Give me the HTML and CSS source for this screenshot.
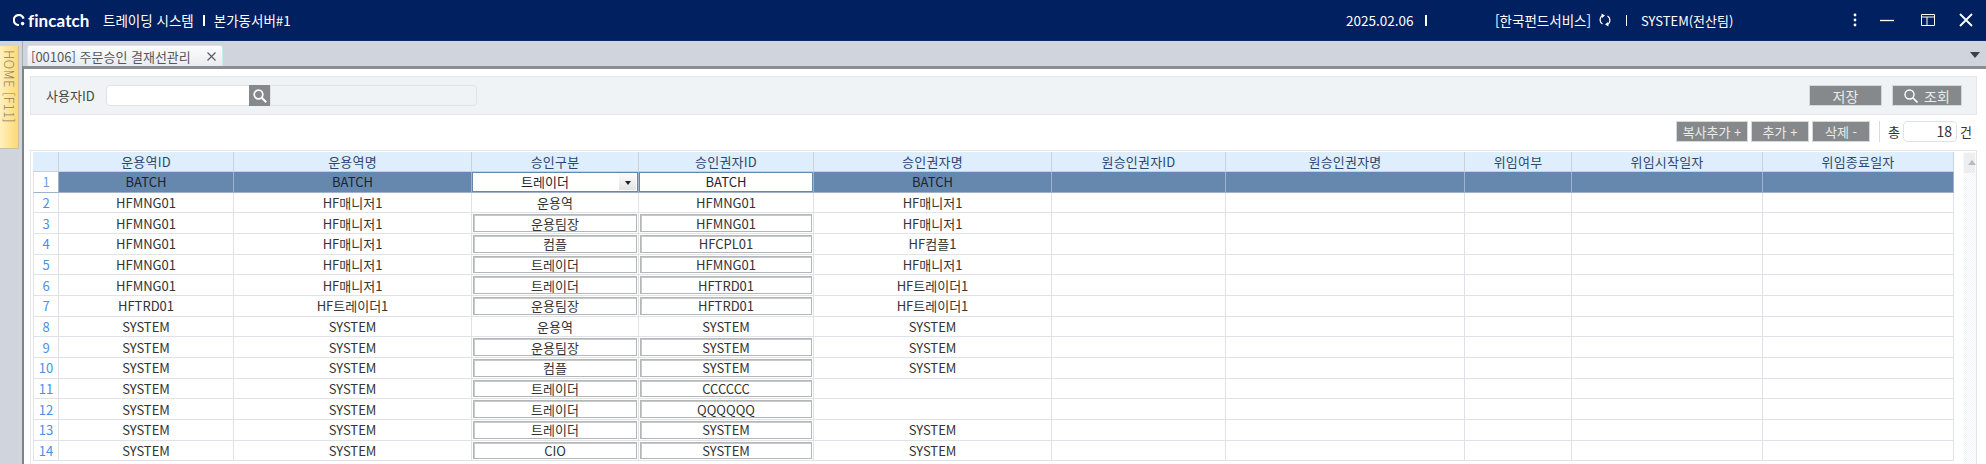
FILE: index.html
```html
<!DOCTYPE html>
<html lang="ko">
<head>
<meta charset="utf-8">
<title>fincatch 트레이딩 시스템</title>
<link rel="stylesheet" href="styles.css">
</head>
<body>
<header class="topbar">
  <div class="brand">
    <svg class="logo-mark" viewBox="0 0 12 12" width="12" height="12"><path d="M10.600 4.600A5 5 0 1 0 6 11" fill="none" stroke="#fff" stroke-width="2.200"/><circle cx="9.600" cy="9.600" r="1.800" fill="#fff"/></svg>
    <span class="logo-text">fincatch</span>
  </div>
  <span class="title t1">트레이딩 시스템</span>
  <i class="sep sep-a"></i>
  <span class="title">본가동서버#1</span>
  <div class="top-right">
    <span class="title date">2025.02.06</span>
    <i class="sep sep-b"></i>
    <span class="title org">[한국펀드서비스]</span>
    <svg class="refresh" viewBox="0 0 14 14" width="14" height="14"><path d="M5 2.200A5 5 0 0 0 4.500 11M9 11.800A5 5 0 0 0 9.500 3" fill="none" stroke="#fff" stroke-width="1.200"/><path d="M3.500 .5L7 2.500 4 5zM10.500 13.500L7 11.500 10 9z" fill="#fff"/></svg>
    <i class="sep sep-c"></i>
    <span class="title user">SYSTEM(전산팀)</span>
    <div class="win">
      <svg class="w-kebab" viewBox="0 0 4 14" width="4" height="14"><circle cx="2" cy="2" r="1.400" fill="#fff"/><circle cx="2" cy="7" r="1.400" fill="#fff"/><circle cx="2" cy="12" r="1.400" fill="#fff"/></svg>
      <svg class="w-min" viewBox="0 0 14 14" width="14" height="14"><path d="M0 7.500h14" stroke="#fff" stroke-width="1.300"/></svg>
      <svg class="w-max" viewBox="0 0 14 14" width="14" height="14"><path d="M.5 1.500h13v11H.5zM.5 4h13M6 4v8.500" fill="none" stroke="#fff"/></svg>
      <svg class="w-close" viewBox="0 0 14 14" width="14" height="14"><path d="M1 1l12 12M13 1L1 13" stroke="#fff" stroke-width="1.800"/></svg>
    </div>
  </div>
</header>
<div class="body">
  <aside class="rail"><div class="home">HOME [F11]</div></aside>
  <main class="work">
    <div class="tabbar">
      <div class="tab"><span>[00106] 주문승인 결재선관리</span><svg viewBox="0 0 9 9" width="9" height="9"><path d="M.5.500l8 8M8.500.500l-8 8" stroke="#555b63" stroke-width="1.100"/></svg></div>
      <i class="tab-menu"></i>
    </div>
    <div class="panel">
      <section class="search">
        <label class="lbl">사용자ID</label>
        <div class="field"></div>
        <button class="find"><svg viewBox="0 0 14 14" width="14" height="14"><circle cx="5.500" cy="5.500" r="4.300" fill="none" stroke="#fff" stroke-width="1.700"/><path d="M8.800 8.800l4.400 4.400" stroke="#fff" stroke-width="2"/></svg></button>
        <div class="field-off"></div>
        <div class="search-actions">
          <button class="btn b-save">저장</button>
          <button class="btn b-query"><svg viewBox="0 0 14 14" width="14" height="14"><circle cx="5.500" cy="5.500" r="4.500" fill="none" stroke="#fff" stroke-width="1.400"/><path d="M9 9l4.500 4.500" stroke="#fff" stroke-width="1.600"/></svg>조회</button>
        </div>
      </section>
      <div class="tools">
        <button class="btn mini w72">복사추가 +</button>
        <button class="btn mini w58">추가 +</button>
        <button class="btn mini w58">삭제 -</button>
        <i class="divider"></i>
        <span class="cnt">총</span>
        <div class="count">18</div>
        <span class="cnt">건</span>
      </div>
      <section class="grid">
        <div class="rows">
          <div class="row head"><div></div><div>운용역ID</div><div>운용역명</div><div>승인구분</div><div>승인권자ID</div><div>승인권자명</div><div>원승인권자ID</div><div>원승인권자명</div><div>위임여부</div><div>위임시작일자</div><div>위임종료일자</div></div>
          <div class="row sel"><div class="n">1</div><div>BATCH</div><div>BATCH</div><div class="c"><span class="box pick">트레이더<b></b></span></div><div class="c"><span class="box strong">BATCH</span></div><div>BATCH</div><div></div><div></div><div></div><div></div><div></div></div>
          <div class="row"><div class="n">2</div><div>HFMNG01</div><div>HF매니저1</div><div>운용역</div><div>HFMNG01</div><div>HF매니저1</div><div></div><div></div><div></div><div></div><div></div></div>
          <div class="row"><div class="n">3</div><div>HFMNG01</div><div>HF매니저1</div><div class="c"><span class="box">운용팀장</span></div><div class="c"><span class="box">HFMNG01</span></div><div>HF매니저1</div><div></div><div></div><div></div><div></div><div></div></div>
          <div class="row"><div class="n">4</div><div>HFMNG01</div><div>HF매니저1</div><div class="c"><span class="box">컴플</span></div><div class="c"><span class="box">HFCPL01</span></div><div>HF컴플1</div><div></div><div></div><div></div><div></div><div></div></div>
          <div class="row"><div class="n">5</div><div>HFMNG01</div><div>HF매니저1</div><div class="c"><span class="box">트레이더</span></div><div class="c"><span class="box">HFMNG01</span></div><div>HF매니저1</div><div></div><div></div><div></div><div></div><div></div></div>
          <div class="row"><div class="n">6</div><div>HFMNG01</div><div>HF매니저1</div><div class="c"><span class="box">트레이더</span></div><div class="c"><span class="box">HFTRD01</span></div><div>HF트레이더1</div><div></div><div></div><div></div><div></div><div></div></div>
          <div class="row"><div class="n">7</div><div>HFTRD01</div><div>HF트레이더1</div><div class="c"><span class="box">운용팀장</span></div><div class="c"><span class="box">HFTRD01</span></div><div>HF트레이더1</div><div></div><div></div><div></div><div></div><div></div></div>
          <div class="row"><div class="n">8</div><div>SYSTEM</div><div>SYSTEM</div><div>운용역</div><div>SYSTEM</div><div>SYSTEM</div><div></div><div></div><div></div><div></div><div></div></div>
          <div class="row"><div class="n">9</div><div>SYSTEM</div><div>SYSTEM</div><div class="c"><span class="box">운용팀장</span></div><div class="c"><span class="box">SYSTEM</span></div><div>SYSTEM</div><div></div><div></div><div></div><div></div><div></div></div>
          <div class="row"><div class="n">10</div><div>SYSTEM</div><div>SYSTEM</div><div class="c"><span class="box">컴플</span></div><div class="c"><span class="box">SYSTEM</span></div><div>SYSTEM</div><div></div><div></div><div></div><div></div><div></div></div>
          <div class="row"><div class="n">11</div><div>SYSTEM</div><div>SYSTEM</div><div class="c"><span class="box">트레이더</span></div><div class="c"><span class="box">CCCCCC</span></div><div></div><div></div><div></div><div></div><div></div><div></div></div>
          <div class="row"><div class="n">12</div><div>SYSTEM</div><div>SYSTEM</div><div class="c"><span class="box">트레이더</span></div><div class="c"><span class="box">QQQQQQ</span></div><div></div><div></div><div></div><div></div><div></div><div></div></div>
          <div class="row"><div class="n">13</div><div>SYSTEM</div><div>SYSTEM</div><div class="c"><span class="box">트레이더</span></div><div class="c"><span class="box">SYSTEM</span></div><div>SYSTEM</div><div></div><div></div><div></div><div></div><div></div></div>
          <div class="row"><div class="n">14</div><div>SYSTEM</div><div>SYSTEM</div><div class="c"><span class="box">CIO</span></div><div class="c"><span class="box">SYSTEM</span></div><div>SYSTEM</div><div></div><div></div><div></div><div></div><div></div></div>
        </div>
        <div class="scroll"><div class="scroll-up"><i></i></div></div>
      </section>
    </div>
  </main>
</div>
</body>
</html>
```
FILE: styles.css
```css
* { box-sizing: border-box; }
html, body { margin: 0; height: 100%; overflow: hidden; }
body {
  width: 1986px; height: 464px; background: #fff; color: #333;
  font: 13px "Noto Sans CJK KR", "Noto Sans", sans-serif;
}
button { font: inherit; border: 0; padding: 0; margin: 0; }
.topbar {
  height: 41px; background: #00205f; border-bottom: 1px solid #0b2a63;
  display: flex; align-items: center; color: #fff; padding-left: 13px;
}
.brand { display: flex; align-items: center; gap: 3px; width: 90px; }
.logo-text { font: 700 17px/1 Lato, sans-serif; letter-spacing: .1px; }
.title { font-size: 13.500px; white-space: nowrap; }
.sep { display: block; width: 2px; height: 11px; background: #fff; flex: none; }
.sep-a { margin: 0 9px; }
.top-right { margin-left: auto; display: flex; align-items: center; width: 640px; }
.date { width: 79px; }
.sep-b { margin-right: 68px; }
.org { width: 103px; }
.refresh { margin-right: 14px; flex: none; }
.sep-c { width: 1px; margin-right: 14px; }
.user { width: 205px; font-size: 13px; }
.win { display: flex; align-items: center; flex: 1; }
.w-kebab { margin-right: 23px; margin-left: 7px; }
.w-min { margin-right: 27px; }
.w-max { margin-right: 24px; }
.body { display: flex; height: 423px; }
.rail { width: 22px; background: #d0d4dd; padding-top: 5px; flex: none; }
.home {
  width: 19px; height: 103px; writing-mode: vertical-rl; text-align: left;
  padding-top: 4px; line-height: 17px; letter-spacing: .4px; color: #8a815f;
  background: linear-gradient(90deg, #fff0bd, #fdd974);
  border-bottom: 1px solid #c8c1a8; border-right: 1px solid #c8c1a8;
  font-size: 13px; font-weight: 300; white-space: nowrap;
}
.work { flex: 1; min-width: 0; background: #d0d4dd; }
.tabbar { height: 25px; display: flex; align-items: flex-end; padding-left: 4px; border-left: 1px solid #a9acb2; position: relative; }
.tab {
  width: 196px; height: 21px; background: linear-gradient(#fbfcfc, #e9ecef);
  border: 1px solid #c6ebee; border-bottom: 0; border-radius: 3px 3px 0 0;
  display: flex; align-items: center; padding: 0 3px; color: #55595f; font-size: 13px;
}
.tab span { width: 176px; white-space: nowrap; }
.tab-menu {
  position: absolute; right: 6px; top: 11px; width: 0; height: 0;
  border: 5px solid transparent; border-top: 6px solid #3d4045; border-bottom: 0;
}
.panel {
  height: 398px; background: #fff; border-top: 3px solid #8a8d91; border-left: 2px solid #7f8286;
  padding: 7px 9px 0 6px; border-bottom: 0;
}
.search {
  height: 39px; background: #f0f3f5; border: 1px solid #e4e8ea; display: flex; align-items: center; padding-left: 15px;
}
.lbl { width: 60px; color: #444; font-size: 13px; white-space: nowrap; }
.field { width: 144px; height: 21px; background: #fff; border: 1px solid #dfe3e6; border-radius: 4px 0 0 4px; }
.find { width: 21px; height: 21px; background: #85898c; display: flex; align-items: center; justify-content: center; margin-left: -1px; }
.field-off { width: 207px; height: 21px; border: 1px solid #dfe3e6; border-radius: 0 4px 4px 0; }
.search-actions { margin-left: auto; display: flex; gap: 10px; padding-right: 14px; }
.btn {
  background: #85898c; color: #e9ebec; height: 21px; display: flex; align-items: center; justify-content: center;
  border: 1px solid #d5d8da; font-size: 14px; white-space: nowrap;
}
.b-save { width: 73px; }
.b-query { width: 70px; gap: 6px; }
.tools { height: 36px; padding-top: 6px; display: flex; justify-content: flex-end; padding-right: 5px; align-items: flex-start; }
.mini { font-size: 13px; margin-right: 3px; }
.w72 { width: 72px; }
.w58 { width: 58px; }
.divider { width: 1px; height: 21px; background: #d8dbde; margin: 0 8px 0 6px; }
.cnt { line-height: 21px; color: #333; width: 12px; }
.count {
  width: 54px; height: 21px; border: 1px solid #dfe3e6; border-radius: 4px; margin: 0 3px 0 3px;
  text-align: right; line-height: 19px; padding-right: 4px; font-size: 14px;
}
.grid { display: flex; height: 330px; border: 1px solid #e3e6e8; padding: 1px 0 0 2px; margin-top: -1px; }
.rows { width: 1926px; flex: none; }
.row {
  display: grid; height: 20.670px;
  grid-template-columns: 26px 175px 238px 167px 175px 238px 174px 239px 107px 191px 191px;
}
.row > div {
  display: flex; align-items: center; justify-content: center; overflow: hidden; white-space: nowrap;
  border-right: 1px solid #dfe2e6; border-bottom: 1px solid #dfe2e6; background-clip: padding-box; color: #333;
}
.row > .n { color: #4d8fe6; border-left: 1px solid #dfe2e6; }
.head { height: 20px; }
.head > div { background: #deeefd; color: #2c4670; border-right: 1px solid #c9d0d8; border-bottom: 1px solid #c9d0d8; letter-spacing: .2px; }
.sel > div { background: #6688ae; color: #1b2430; border-right-color: #9fb3ca; border-bottom-color: #9fb3ca; }
.row.sel > .n { background: #fff; color: #6d9eea; }
.row > .c { padding: 1px; background: #fff; }
.sel > .c { background: #6688ae; }
.box {
  display: flex; align-items: center; justify-content: center; position: relative;
  width: 100%; height: 100%; background: #fff; border: 1px solid #b4b6b8; box-shadow: inset 1px 1px 0 #c6c8ca;
}
.strong, .pick { border-color: #fff; box-shadow: 0 0 0 1px #6688ae; }
.pick { justify-content: flex-start; padding-left: 47px; }
.pick b {
  position: absolute; right: 0; top: 0; bottom: 0; width: 17px; background: linear-gradient(#fbfbfb, #e3e3e3);
}
.pick b::after {
  content: ""; position: absolute; left: 6px; top: 7px; width: 0; height: 0;
  border: 3px solid transparent; border-top: 4px solid #222; border-bottom: 0;
}
.scroll {
  width: 18px; margin-left: 4px; height: 100%;
  background: repeating-conic-gradient(#f3f4f5 0 25%, #fff 0 50%) 0 0 / 2px 2px;
}
.scroll-up { height: 20px; margin: 1px 1px 0 1px; background: #eceef0; position: relative; }
.scroll-up i {
  position: absolute; left: 4px; top: 7px; width: 0; height: 0;
  border: 4px solid transparent; border-bottom: 5px solid #b8bbbe; border-top: 0;
}
```
